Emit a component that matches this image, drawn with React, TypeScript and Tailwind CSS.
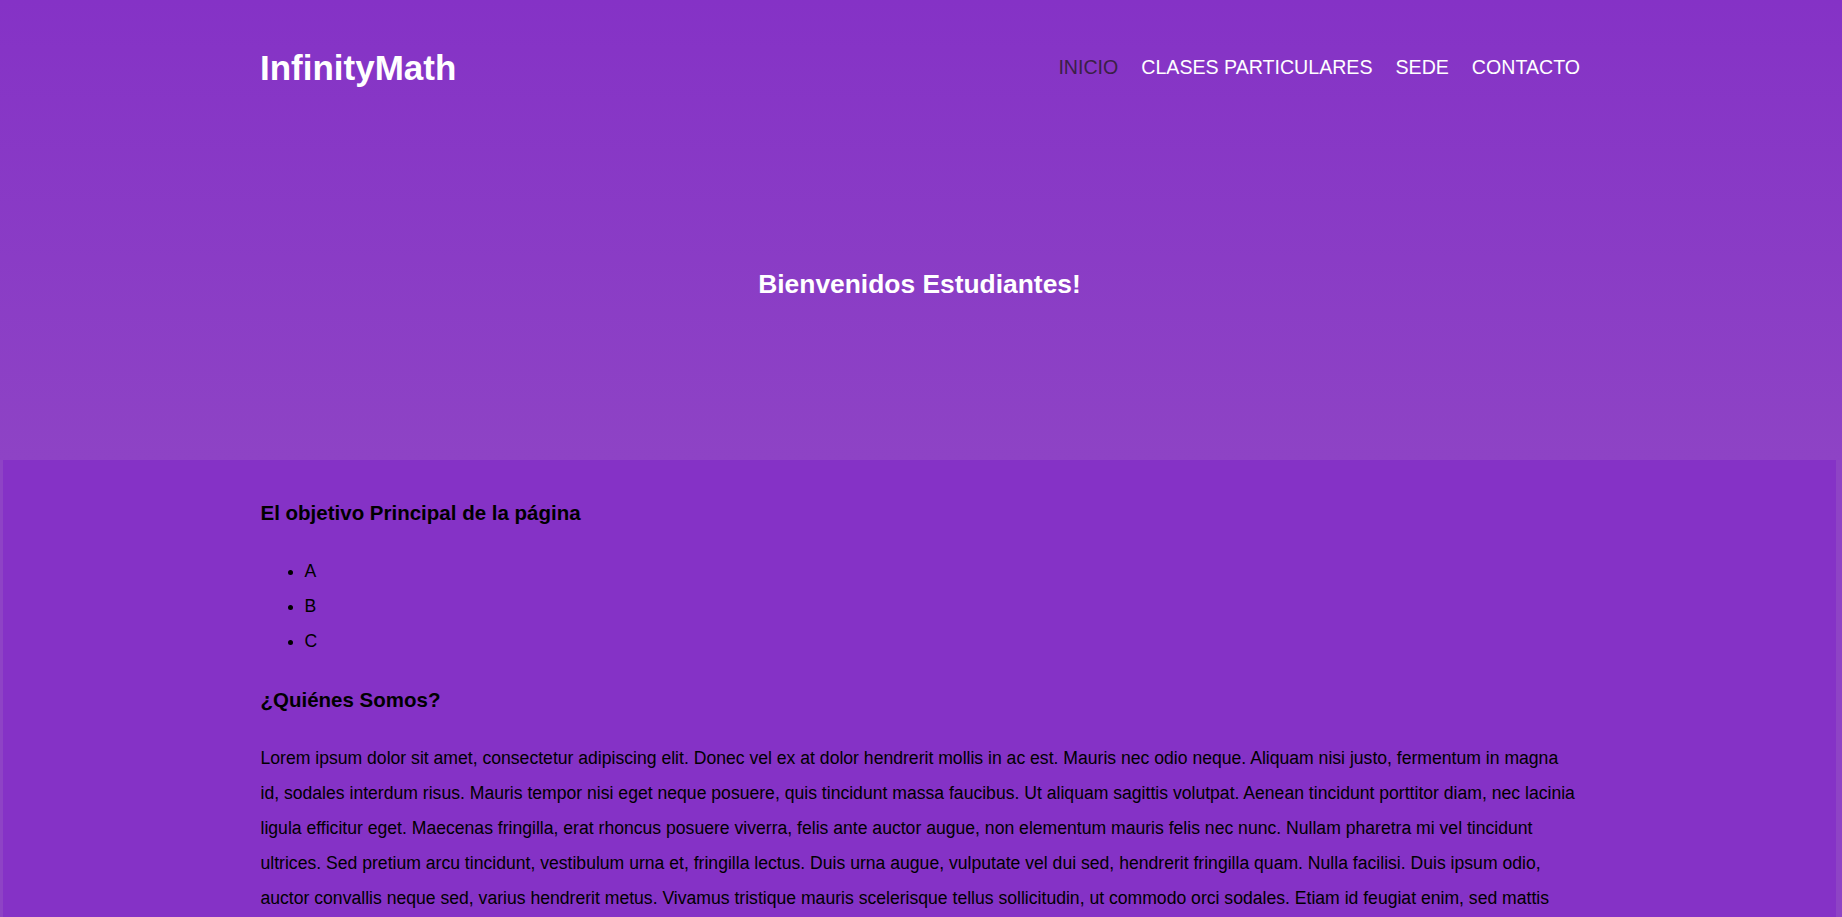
const navItems = ["INICIO", "CLASES PARTICULARES", "SEDE", "CONTACTO"];

const lorem =
  "Lorem ipsum dolor sit amet, consectetur adipiscing elit. Donec vel ex at dolor hendrerit mollis in ac est. Mauris nec odio neque. Aliquam nisi justo, fermentum in magna id, sodales interdum risus. Mauris tempor nisi eget neque posuere, quis tincidunt massa faucibus. Ut aliquam sagittis volutpat. Aenean tincidunt porttitor diam, nec lacinia ligula efficitur eget. Maecenas fringilla, erat rhoncus posuere viverra, felis ante auctor augue, non elementum mauris felis nec nunc. Nullam pharetra mi vel tincidunt ultrices. Sed pretium arcu tincidunt, vestibulum urna et, fringilla lectus. Duis urna augue, vulputate vel dui sed, hendrerit fringilla quam. Nulla facilisi. Duis ipsum odio, auctor convallis neque sed, varius hendrerit metus. Vivamus tristique mauris scelerisque tellus sollicitudin, ut commodo orci sodales. Etiam id feugiat enim, sed mattis nisl. Proin vitae quam a arcu vehicula pellentesque. Integer ut lorem at neque faucibus tempor vitae non nibh.";

export default function App() {
  return (
    <div className="min-h-screen bg-[#8e43c5] font-['Liberation_Sans',Arial,sans-serif] text-black">
      {/* header + hero */}
      <header className="h-[460px] bg-gradient-to-b from-[#8532c6] to-[#8e43c5]">
        <div className="mx-auto flex w-[1322px] items-center justify-between pt-[50px]">
          <a href="#" className="text-[35px] font-bold leading-[35px] text-white">
            InfinityMath
          </a>
          <nav className="flex items-center gap-[23px] pr-[2px]">
            {navItems.map((item, i) => (
              <a
                key={item}
                href="#"
                className={
                  i === 0
                    ? "text-[19.6px] leading-[19.6px] text-[#3b2046]"
                    : "text-[19.6px] leading-[19.6px] text-white"
                }
              >
                {item}
              </a>
            ))}
          </nav>
        </div>
        <h1 className="pr-[3px] pt-[186px] text-center text-[26.4px] font-bold leading-[26px] text-white">
          Bienvenidos Estudiantes!
        </h1>
      </header>

      {/* main content */}
      <main className="ml-[3px] mr-[6px] bg-[#8532c6] pb-10 pt-[43px]">
        <div className="mx-auto w-[1318px]">
          <h2 className="text-[20.5px] font-bold leading-[20.5px]">
            El objetivo Principal de la página
          </h2>
          <ul className="mt-[30px] list-disc pl-[44px] text-[17.6px] leading-[35.2px]">
            <li>A</li>
            <li>B</li>
            <li>C</li>
          </ul>
          <h2 className="mt-[31px] text-[20.5px] font-bold leading-[20.5px]">¿Quiénes Somos?</h2>
          <p className="mt-[30px] text-[17.6px] leading-[35.2px]">{lorem}</p>
        </div>
      </main>
    </div>
  );
}
